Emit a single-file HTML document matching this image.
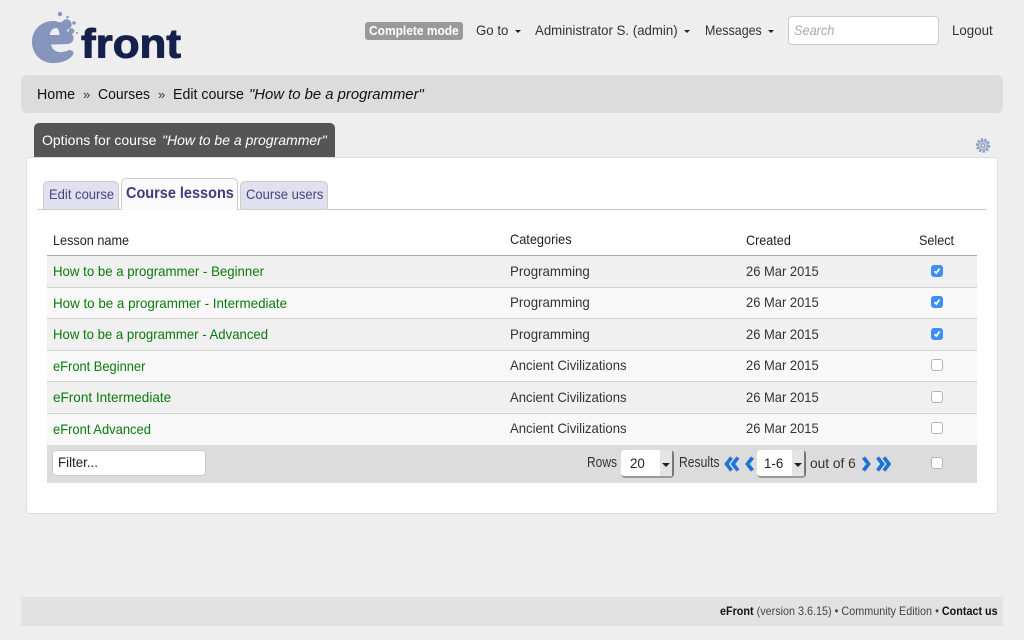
<!DOCTYPE html>
<html><head><meta charset="utf-8"><style>
html,body{margin:0;padding:0;width:1024px;height:640px;overflow:hidden;background:#eee;font-family:"Liberation Sans",sans-serif;font-size:14px;color:#222}
.a{position:absolute;white-space:nowrap;line-height:18px;transform:scaleX(var(--s,1));transform-origin:0 50%}
.box{position:absolute;box-sizing:border-box}
.g{color:#0a7a0a}.d{color:#333}
.hl{left:47px;width:930px;height:1px;background:#d2d2d2}
.cb{position:absolute;left:931px;width:12px;height:12px;box-sizing:border-box;border:1px solid #b4b4b4;border-radius:3px;background:#fff}
.cb.on{background:#3b8ff5;border-color:#3b8ff5}
.cb svg{position:absolute;left:0;top:0}
.tri{position:absolute;width:0;height:0;border-left:3px solid transparent;border-right:3px solid transparent;border-top:3px solid #222}
.tb{border-left-width:4px;border-right-width:4px;border-top-width:4px}
.sel{position:absolute;top:450px;height:28px;background:#fff;border-radius:4px;box-sizing:border-box;border-right:2px solid #777;border-bottom:2px solid #999}
.sel i{position:absolute;right:0;top:0;width:12px;height:26px;background:#e4e4e4}
</style></head><body>
<svg class="box" style="left:0;top:0" width="200" height="70" viewBox="0 0 200 70">
<path fill="#8595bd" fill-rule="evenodd" d="M53 21C41 21 32 30 32 42C32 54 41 63 53 63C62 63 70 60 73.5 54C74 51 71 50 69 50C66 51.500 62 52.500 59 52C55 51.500 52 49 51 44.500L68 44C71.500 43.500 73.500 41 73.500 38C73.500 35 71 32.500 68 32C66 28 62 24 58 22C56 21 55 21 53 21ZM50 35C50 31 53 28 56 28C58.500 28 59.500 32 59.500 35Z"/>
<circle cx="66.500" cy="24.500" r="5.200" fill="#8595bd"/><circle cx="60" cy="14" r="2.200" fill="#8595bd"/><circle cx="67.500" cy="17" r="1.300" fill="#8595bd"/><circle cx="74" cy="23" r="1.800" fill="#8595bd"/><circle cx="71.500" cy="31" r="2.800" fill="#8595bd"/><circle cx="77" cy="33" r="1" fill="#8595bd"/><circle cx="60" cy="24" r="2" fill="#8595bd"/>
<text x="81" y="57.500" font-family="Liberation Sans" font-weight="700" font-size="41" fill="#16204d" stroke="#16204d" stroke-width="1" stroke-linejoin="round" textLength="100" lengthAdjust="spacingAndGlyphs">front</text>
</svg>

<div class="box" style="left:365px;top:22px;width:98px;height:18px;background:#999;border-radius:3px"></div>
<div class="a" style="left:369px;top:22px;color:#fff;font-weight:700;font-size:13px;--s:.92">Complete mode</div>
<div class="a d" style="left:476px;top:21px;--s:.945">Go to</div><div class="tri" style="left:515px;top:30px"></div>
<div class="a d" style="left:535px;top:21px;--s:.945">Administrator S. (admin)</div><div class="tri" style="left:684px;top:30px"></div>
<div class="a d" style="left:705px;top:21px;--s:.89">Messages</div><div class="tri" style="left:768px;top:30px"></div>
<div class="box" style="left:788px;top:16px;width:151px;height:29px;background:#fff;border:1px solid #ccc;border-radius:4px"></div>
<div class="a" style="left:794px;top:21px;color:#aaa;font-style:italic;--s:.91">Search</div>
<div class="a d" style="left:952px;top:21px;--s:.95">Logout</div>

<div class="box" style="left:21px;top:75px;width:982px;height:38px;background:#dcdcdc;border-radius:6px"></div>
<div class="a" style="left:37px;top:86px;color:#111;font-size:15px;--s:.95">Home</div>
<div class="a" style="left:83px;top:86px;color:#333;font-size:13px">»</div>
<div class="a" style="left:98px;top:86px;color:#111;font-size:15px;--s:.93">Courses</div>
<div class="a" style="left:158px;top:86px;color:#333;font-size:13px">»</div>
<div class="a" style="left:173px;top:86px;color:#111;font-size:15px;--s:.945">Edit course</div>
<div class="a" style="left:249px;top:86px;color:#111;font-size:15px;font-style:italic;--s:.99">"How to be a programmer"</div>

<div class="box" style="left:34px;top:123px;width:301px;height:36px;background:#555;border-radius:5px 5px 0 0"></div>
<div class="a" style="left:42px;top:131px;color:#fff">Options for course</div>
<div class="a" style="left:162px;top:131px;color:#fff;font-style:italic">"How to be a programmer"</div>
<svg class="box" style="left:975px;top:137px" width="16" height="17" viewBox="0 0 16 17"><circle cx="8" cy="8.500" r="6" fill="none" stroke="#8c9bbb" stroke-width="2.400" stroke-dasharray="2.200 1.500"/><circle cx="8" cy="8.500" r="4.800" fill="#bcc7dc" stroke="#97a5c2" stroke-width="1"/><circle cx="8" cy="8.500" r="1.600" fill="#eef1f6" stroke="#8a99b8"/></svg>

<div class="box" style="left:26px;top:157px;width:972px;height:357px;background:#fff;border:1px solid #ddd;border-radius:4px"></div>

<div class="box" style="left:37px;top:209px;width:950px;height:1px;background:#ccc"></div>
<div class="box" style="left:43px;top:181px;width:76px;height:28px;background:#e0e0ee;border:1px solid #ccc;border-bottom:0;border-radius:5px 5px 0 0"></div>
<div class="a" style="left:49px;top:185px;color:#45457f;--s:.93">Edit course</div>
<div class="box" style="left:121px;top:178px;width:117px;height:32px;background:#fafafa;border:1px solid #ccc;border-bottom:0;border-radius:5px 5px 0 0"></div>
<div class="a" style="left:126px;top:185px;color:#3c3c7c;font-size:16px;font-weight:700;--s:.905">Course lessons</div>
<div class="box" style="left:240px;top:181px;width:88px;height:28px;background:#e0e0ee;border:1px solid #ccc;border-bottom:0;border-radius:5px 5px 0 0"></div>
<div class="a" style="left:246px;top:185px;color:#45457f;--s:.93">Course users</div>

<div class="a" style="left:53px;top:231px;--s:.905">Lesson name</div>
<div class="a" style="left:510px;top:230px;--s:.91">Categories</div>
<div class="a" style="left:746px;top:231px;--s:.9">Created</div>
<div class="a" style="left:919px;top:231px;--s:.9">Select</div>

<div class="box" style="left:47px;top:255px;width:930px;height:1px;background:#aaa"></div>
<div class="box" style="left:47px;top:256px;width:930px;height:31px;background:#f0f0f0"></div>
<div class="box" style="left:47px;top:288px;width:930px;height:30px;background:#f8f8f8"></div>
<div class="box" style="left:47px;top:319px;width:930px;height:31px;background:#f0f0f0"></div>
<div class="box" style="left:47px;top:351px;width:930px;height:30px;background:#f8f8f8"></div>
<div class="box" style="left:47px;top:382px;width:930px;height:31px;background:#f0f0f0"></div>
<div class="box" style="left:47px;top:414px;width:930px;height:31px;background:#f8f8f8"></div>
<div class="box hl" style="top:287px"></div><div class="box hl" style="top:318px"></div><div class="box hl" style="top:350px"></div><div class="box hl" style="top:381px"></div><div class="box hl" style="top:413px"></div>
<div class="box" style="left:47px;top:445px;width:930px;height:38px;background:#dcdcdc"></div>

<div class="a g" style="left:53px;top:262px;--s:.945">How to be a programmer - Beginner</div>
<div class="a d" style="left:510px;top:262px;--s:.95">Programming</div>
<div class="a d" style="left:746px;top:262px;--s:.925">26 Mar 2015</div>
<div class="cb on" style="top:265px"><svg width="10" height="10"><path d="M2.500 5.200L4.300 7L7.600 2.600" fill="none" stroke="#fff" stroke-width="1.800"/></svg></div>

<div class="a g" style="left:53px;top:294px;--s:.955">How to be a programmer - Intermediate</div>
<div class="a d" style="left:510px;top:293px;--s:.95">Programming</div>
<div class="a d" style="left:746px;top:293px;--s:.925">26 Mar 2015</div>
<div class="cb on" style="top:296px"><svg width="10" height="10"><path d="M2.500 5.200L4.300 7L7.600 2.600" fill="none" stroke="#fff" stroke-width="1.800"/></svg></div>

<div class="a g" style="left:53px;top:325px;--s:.94">How to be a programmer - Advanced</div>
<div class="a d" style="left:510px;top:325px;--s:.95">Programming</div>
<div class="a d" style="left:746px;top:325px;--s:.925">26 Mar 2015</div>
<div class="cb on" style="top:328px"><svg width="10" height="10"><path d="M2.500 5.200L4.300 7L7.600 2.600" fill="none" stroke="#fff" stroke-width="1.800"/></svg></div>

<div class="a g" style="left:53px;top:357px;--s:.92">eFront Beginner</div>
<div class="a d" style="left:510px;top:356px;--s:.936">Ancient Civilizations</div>
<div class="a d" style="left:746px;top:356px;--s:.925">26 Mar 2015</div>
<div class="cb" style="top:359px"></div>

<div class="a g" style="left:53px;top:388px;--s:.967">eFront Intermediate</div>
<div class="a d" style="left:510px;top:388px;--s:.936">Ancient Civilizations</div>
<div class="a d" style="left:746px;top:388px;--s:.925">26 Mar 2015</div>
<div class="cb" style="top:391px"></div>

<div class="a g" style="left:53px;top:420px;--s:.925">eFront Advanced</div>
<div class="a d" style="left:510px;top:419px;--s:.936">Ancient Civilizations</div>
<div class="a d" style="left:746px;top:419px;--s:.925">26 Mar 2015</div>
<div class="cb" style="top:422px"></div>

<div class="box" style="left:52px;top:450px;width:154px;height:26px;background:#fff;border:1px solid #ccc;border-radius:4px"></div>
<div class="a" style="left:58px;top:453px;color:#222;--s:.95">Filter...</div>

<div class="a" style="left:587px;top:454px;color:#333;font-size:15px;--s:.8">Rows</div>
<div class="sel" style="left:621px;width:53px"><i></i></div>
<div class="a" style="left:630px;top:454px;color:#222;--s:.95">20</div><div class="tri tb" style="left:662px;top:463px"></div>
<div class="a" style="left:679px;top:454px;color:#333;font-size:15px;--s:.81">Results</div>
<svg class="box" style="left:724px;top:456px" width="32" height="16" viewBox="0 0 32 16"><path d="M7.500 1.500L2.500 8L7.500 14.500M14 1.500L9 8L14 14.500" fill="none" stroke="#1f72d6" stroke-width="3.600"/><path d="M28.500 1.500L23.500 8L28.500 14.500" fill="none" stroke="#1f72d6" stroke-width="3.800"/></svg>
<div class="sel" style="left:757px;width:49px"><i></i></div>
<div class="a" style="left:764px;top:454px;color:#222;--s:.95">1-6</div><div class="tri tb" style="left:794px;top:463px"></div>
<div class="a d" style="left:810px;top:454px;--s:.98">out of 6</div>
<svg class="box" style="left:860px;top:456px" width="32" height="16" viewBox="0 0 32 16"><path d="M3.500 1.500L8.500 8L3.500 14.500" fill="none" stroke="#1f72d6" stroke-width="3.800"/><path d="M17.500 1.500L22.500 8L17.500 14.500M24 1.500L29 8L24 14.500" fill="none" stroke="#1f72d6" stroke-width="3.600"/></svg>
<div class="cb" style="top:457px"></div>

<div class="box" style="left:21px;top:597px;width:982px;height:29px;background:#e2e2e2"></div>
<div class="a" style="left:720px;top:602px;font-size:12px;color:#444;--s:.9"><span style="color:#111;font-weight:700">eFront</span> (version 3.6.15) • Community Edition • <span style="color:#111;font-weight:700">Contact us</span></div>
</body></html>
